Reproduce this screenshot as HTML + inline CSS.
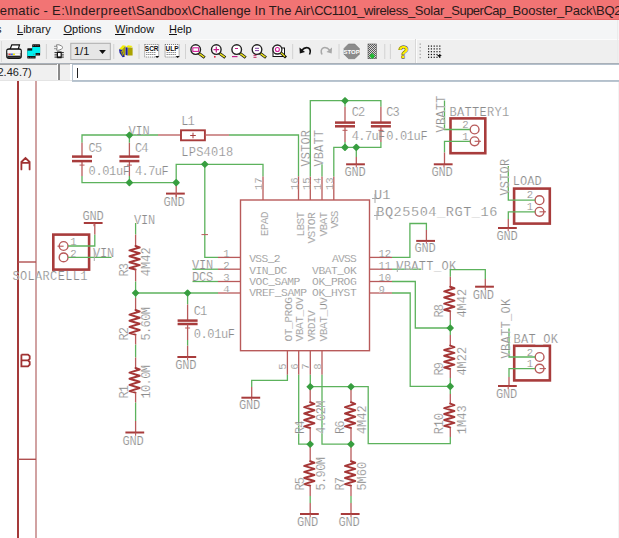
<!DOCTYPE html>
<html><head><meta charset="utf-8">
<style>
html,body{margin:0;padding:0;}
body{width:619px;height:538px;overflow:hidden;position:relative;background:#fff;font-family:"Liberation Sans",sans-serif;}
#sch{position:absolute;left:0;top:0;}
#sch text{font-family:"Liberation Mono",monospace;fill:#8c8c8c;stroke:#fff;stroke-width:0.2px;paint-order:fill;}
.title{position:absolute;left:0;top:0;width:619px;height:20px;background:#f27474;color:#2a1a1a;font-size:13px;white-space:nowrap;overflow:hidden;}
.title span{position:absolute;top:1.5px;line-height:18px;}
.menu{position:absolute;left:0;top:20px;width:619px;height:19px;background:#f4f5f6;font-size:11px;white-space:nowrap;color:#111;}
.menu span{position:absolute;top:1px;line-height:16px;}
.menu u{text-decoration:underline;}
.tool{position:absolute;left:0;top:39px;width:619px;height:24px;background:#efefef;}
.tb{position:absolute;left:0;top:63px;width:619px;height:1px;background:#a9b0b8;}
.cmd{position:absolute;left:0;top:64px;width:619px;height:17px;background:#fff;}
.coord{position:absolute;left:0;top:0;width:57px;height:16px;background:#f0f0f0;border-top:1.5px solid #a0a0a0;box-sizing:border-box;font-size:12px;line-height:15px;color:#222;white-space:nowrap;overflow:hidden;}
</style></head><body>
<svg id="sch" width="619" height="538" viewBox="0 0 619 538">
<line x1="18" y1="81" x2="18" y2="538" stroke="#a53a3a" stroke-width="2"/>
<line x1="36" y1="81" x2="36" y2="538" stroke="#cc9898" stroke-width="1.8"/>
<line x1="18" y1="262" x2="36" y2="262" stroke="#b05050" stroke-width="1.4"/>
<line x1="18" y1="459.3" x2="36" y2="459.3" stroke="#b05050" stroke-width="1.4"/>
<path d="M21.4,169.4 L21.4,162 L25.5,158 L29.6,162 L29.6,169.4 M21.4,162.8 H29.6" fill="none" stroke="#a03232" stroke-width="1.8" stroke-linecap="round"/>
<path d="M21.4,354.6 V366.3 H28 L29.7,364.6 V362 L28,360.4 H21.4 M28,360.4 L29.7,358.8 V356.2 L28,354.6 H21.4" fill="none" stroke="#a03232" stroke-width="1.8" />
<path d="M82,142.7 V135 H158" fill="none" stroke="#5cb25c" stroke-width="1.3" stroke-linejoin="miter"/>
<path d="M158,135 H181" fill="none" stroke="#b85a5a" stroke-width="1.3" />
<rect x="181" y="130.3" width="23.9" height="10" fill="none" stroke="#a83c3c" stroke-width="1.9"/>
<line x1="190.2" y1="135.5" x2="195.8" y2="135.5" stroke="#a83c3c" stroke-width="1"/>
<line x1="193" y1="132.7" x2="193" y2="138.3" stroke="#a83c3c" stroke-width="1"/>
<path d="M204.8,135 H229" fill="none" stroke="#b85a5a" stroke-width="1.3" />
<path d="M229,135 H298.5 V176.4" fill="none" stroke="#5cb25c" stroke-width="1.3" stroke-linejoin="miter"/>
<path d="M82,142.7 V156" fill="none" stroke="#b85a5a" stroke-width="1.3" />
<path d="M82,161.6 V176" fill="none" stroke="#b85a5a" stroke-width="1.3" />
<line x1="72" y1="156.6" x2="92" y2="156.6" stroke="#a83c3c" stroke-width="2.5"/>
<line x1="72" y1="161.1" x2="92" y2="161.1" stroke="#a83c3c" stroke-width="2.5"/>
<line x1="79.5" y1="165.1" x2="84.5" y2="165.1" stroke="#b85a5a" stroke-width="1"/>
<path d="M129.4,142.7 V156" fill="none" stroke="#b85a5a" stroke-width="1.3" />
<path d="M129.4,161.6 V176" fill="none" stroke="#b85a5a" stroke-width="1.3" />
<line x1="119.4" y1="156.6" x2="139.4" y2="156.6" stroke="#a83c3c" stroke-width="2.5"/>
<line x1="119.4" y1="161.1" x2="139.4" y2="161.1" stroke="#a83c3c" stroke-width="2.5"/>
<line x1="126.9" y1="165.1" x2="131.9" y2="165.1" stroke="#b85a5a" stroke-width="1"/>
<path d="M82,176 V182.6 H176.2" fill="none" stroke="#5cb25c" stroke-width="1.3" stroke-linejoin="miter"/>
<path d="M129.4,135 V142.7" fill="none" stroke="#5cb25c" stroke-width="1.3" stroke-linejoin="miter"/>
<path d="M129.4,176 V182.6" fill="none" stroke="#5cb25c" stroke-width="1.3" stroke-linejoin="miter"/>
<path d="M176.2,186 V164.3 H263 V176.4" fill="none" stroke="#5cb25c" stroke-width="1.3" stroke-linejoin="miter"/>
<line x1="166.0" y1="193.6" x2="184.79999999999998" y2="193.6" stroke="#a83c3c" stroke-width="2.0"/>
<line x1="176.2" y1="193.6" x2="176.2" y2="196.79999999999998" stroke="#b85a5a" stroke-width="1.1"/>
<line x1="176.2" y1="186" x2="176.2" y2="199.6" stroke="#b85a5a" stroke-width="1.3"/>
<path d="M204.8,164.3 V257.4 H218" fill="none" stroke="#5cb25c" stroke-width="1.3" stroke-linejoin="miter"/>
<line x1="201.5" y1="234.6" x2="208" y2="234.6" stroke="#b85a5a" stroke-width="1"/>
<text x="88.6" y="151.6" font-size="12.0" textLength="13.5" lengthAdjust="spacing">C5</text>
<text x="88.6" y="175" font-size="12.0" textLength="41.3" lengthAdjust="spacing">0.01uF</text>
<text x="135.0" y="151.8" font-size="12.0" textLength="13.5" lengthAdjust="spacing">C4</text>
<text x="135.0" y="174.8" font-size="12.0" textLength="33.6" lengthAdjust="spacing">4.7uF</text>
<text x="128.4" y="135.3" font-size="12.0" textLength="21.2" lengthAdjust="spacing">VIN</text>
<text x="181.2" y="124.6" font-size="12.0" textLength="13.5" lengthAdjust="spacing">L1</text>
<text x="181.2" y="155.8" font-size="12.0" textLength="52.0" lengthAdjust="spacing">LPS4018</text>
<text x="163.4" y="205.6" font-size="12.0" textLength="21.2" lengthAdjust="spacing">GND</text>
<rect x="53.3" y="234.6" width="35.8" height="35.00000000000003" fill="none" stroke="#a83c3c" stroke-width="2.6"/>
<circle cx="63.6" cy="246" r="4.4" fill="none" stroke="#b85a5a" stroke-width="1.4"/>
<circle cx="63.6" cy="257.4" r="4.4" fill="none" stroke="#b85a5a" stroke-width="1.4"/>
<line x1="57.5" y1="246.2" x2="63.6" y2="246.2" stroke="#b85a5a" stroke-width="1.1"/>
<path d="M68,246 H94.8 V234.6" fill="none" stroke="#5cb25c" stroke-width="1.3" stroke-linejoin="miter"/>
<path d="M94.8,234.6 V223" fill="none" stroke="#b85a5a" stroke-width="1.3" />
<line x1="83.8" y1="223" x2="102.6" y2="223" stroke="#a83c3c" stroke-width="2.0"/>
<line x1="94" y1="223" x2="94" y2="226.2" stroke="#b85a5a" stroke-width="1.1"/>
<path d="M68,257.4 H111.5" fill="none" stroke="#5cb25c" stroke-width="1.3" stroke-linejoin="miter"/>
<line x1="94.3" y1="250" x2="94.3" y2="261" stroke="#aaaaaa" stroke-width="1"/>
<text x="82.4" y="219.5" font-size="12.0" textLength="21.2" lengthAdjust="spacing">GND</text>
<text x="70.2" y="245.3" font-size="10.6">1</text>
<text x="70.2" y="256.5" font-size="10.6">2</text>
<text x="93.1" y="257.4" font-size="12.0" textLength="21.2" lengthAdjust="spacing">VIN</text>
<text x="12.4" y="280.3" font-size="12.0" textLength="75.1" lengthAdjust="spacing">SOLARCELL1</text>
<text x="133.9" y="223.5" font-size="12.0" textLength="21.2" lengthAdjust="spacing">VIN</text>
<path d="M135.6,223 V234.6" fill="none" stroke="#5cb25c" stroke-width="1.3" stroke-linejoin="miter"/>
<path d="M135.6,234.6 V246" fill="none" stroke="#b85a5a" stroke-width="1.3" />
<path d="M135.5,246.0 L139.7,247.5 L129.5,250.4 L139.7,253.3 L129.5,256.3 L139.7,259.2 L129.5,262.2 L139.7,265.1 L129.5,268.0 L135.5,269.5" fill="none" stroke="#a53636" stroke-width="2.0" stroke-linejoin="round" stroke-linecap="round"/>
<path d="M135.6,269.5 V281.5" fill="none" stroke="#b85a5a" stroke-width="1.3" />
<path d="M135.6,281.5 V298" fill="none" stroke="#5cb25c" stroke-width="1.3" stroke-linejoin="miter"/>
<path d="M135.6,298 V310" fill="none" stroke="#b85a5a" stroke-width="1.3" />
<path d="M135.5,310.0 L139.7,311.5 L129.5,314.6 L139.7,317.7 L129.5,320.8 L139.7,323.8 L129.5,326.9 L139.7,330.0 L129.5,333.1 L135.5,334.6" fill="none" stroke="#a53636" stroke-width="2.0" stroke-linejoin="round" stroke-linecap="round"/>
<path d="M135.6,334.6 V344.6" fill="none" stroke="#b85a5a" stroke-width="1.3" />
<path d="M135.6,344.6 V357.5" fill="none" stroke="#5cb25c" stroke-width="1.3" stroke-linejoin="miter"/>
<path d="M135.6,357.5 V368" fill="none" stroke="#b85a5a" stroke-width="1.3" />
<path d="M135.5,368.0 L139.7,369.5 L129.5,372.6 L139.7,375.7 L129.5,378.8 L139.7,381.8 L129.5,384.9 L139.7,388.0 L129.5,391.1 L135.5,392.6" fill="none" stroke="#a53636" stroke-width="2.0" stroke-linejoin="round" stroke-linecap="round"/>
<path d="M135.6,392.6 V402.6" fill="none" stroke="#b85a5a" stroke-width="1.3" />
<path d="M135.6,402.6 V421" fill="none" stroke="#5cb25c" stroke-width="1.3" stroke-linejoin="miter"/>
<path d="M135.6,421 V432.5" fill="none" stroke="#b85a5a" stroke-width="1.3" />
<line x1="125.39999999999999" y1="432.5" x2="144.2" y2="432.5" stroke="#a83c3c" stroke-width="2.0"/>
<line x1="135.6" y1="432.5" x2="135.6" y2="435.7" stroke="#b85a5a" stroke-width="1.1"/>
<text x="122.4" y="445" font-size="12.0" textLength="21.2" lengthAdjust="spacing">GND</text>
<text transform="translate(127.8,276.6) rotate(-90)" font-size="12.0" textLength="13.5" lengthAdjust="spacing">R3</text>
<text transform="translate(150.1,276.3) rotate(-90)" font-size="12.0" textLength="28.9" lengthAdjust="spacing">4M42</text>
<text transform="translate(127.8,340.6) rotate(-90)" font-size="12.0" textLength="13.5" lengthAdjust="spacing">R2</text>
<text transform="translate(150.1,340.6) rotate(-90)" font-size="12.0" textLength="33.6" lengthAdjust="spacing">5.60M</text>
<text transform="translate(127.8,398.6) rotate(-90)" font-size="12.0" textLength="13.5" lengthAdjust="spacing">R1</text>
<text transform="translate(150.1,398.6) rotate(-90)" font-size="12.0" textLength="33.6" lengthAdjust="spacing">10.0M</text>
<path d="M135.6,293 H218" fill="none" stroke="#5cb25c" stroke-width="1.3" stroke-linejoin="miter"/>
<path d="M187.6,293 V304.5" fill="none" stroke="#5cb25c" stroke-width="1.3" stroke-linejoin="miter"/>
<path d="M187.6,304.5 V320" fill="none" stroke="#b85a5a" stroke-width="1.3" />
<line x1="177.6" y1="320.6" x2="197.6" y2="320.6" stroke="#a83c3c" stroke-width="2.5"/>
<line x1="177.6" y1="324.0" x2="197.6" y2="324.0" stroke="#a83c3c" stroke-width="2.5"/>
<line x1="185.1" y1="328.0" x2="190.1" y2="328.0" stroke="#b85a5a" stroke-width="1"/>
<path d="M187.6,324.5 V340" fill="none" stroke="#b85a5a" stroke-width="1.3" />
<path d="M187.6,340 V345.7" fill="none" stroke="#5cb25c" stroke-width="1.3" stroke-linejoin="miter"/>
<path d="M187.6,345.7 V357" fill="none" stroke="#b85a5a" stroke-width="1.3" />
<line x1="177.4" y1="357" x2="196.2" y2="357" stroke="#a83c3c" stroke-width="2.0"/>
<line x1="187.6" y1="357" x2="187.6" y2="360.2" stroke="#b85a5a" stroke-width="1.1"/>
<text x="193.7" y="315" font-size="12.0" textLength="13.5" lengthAdjust="spacing">C1</text>
<text x="193.7" y="338" font-size="12.0" textLength="41.3" lengthAdjust="spacing">0.01uF</text>
<text x="175.2" y="369" font-size="12.0" textLength="21.2" lengthAdjust="spacing">GND</text>
<path d="M192.5,269.2 H218" fill="none" stroke="#5cb25c" stroke-width="1.3" stroke-linejoin="miter"/>
<path d="M192.5,281.5 H218" fill="none" stroke="#5cb25c" stroke-width="1.3" stroke-linejoin="miter"/>
<text x="191.9" y="269" font-size="12.0" textLength="21.2" lengthAdjust="spacing">VIN</text>
<text x="191.9" y="281" font-size="12.0" textLength="21.2" lengthAdjust="spacing">DCS</text>
<rect x="240.5" y="200" width="129" height="150.7" fill="none" stroke="#b85a5a" stroke-width="1.4"/>
<path d="M218,257.4 H240.5" fill="none" stroke="#b85a5a" stroke-width="1.3" />
<path d="M369.5,257.4 H392" fill="none" stroke="#b85a5a" stroke-width="1.3" />
<path d="M218,269.2 H240.5" fill="none" stroke="#b85a5a" stroke-width="1.3" />
<path d="M369.5,269.2 H392" fill="none" stroke="#b85a5a" stroke-width="1.3" />
<path d="M218,281.5 H240.5" fill="none" stroke="#b85a5a" stroke-width="1.3" />
<path d="M369.5,281.5 H392" fill="none" stroke="#b85a5a" stroke-width="1.3" />
<path d="M218,293 H240.5" fill="none" stroke="#b85a5a" stroke-width="1.3" />
<path d="M369.5,293 H392" fill="none" stroke="#b85a5a" stroke-width="1.3" />
<path d="M263,176.4 V200" fill="none" stroke="#b85a5a" stroke-width="1.3" />
<path d="M298.5,176.4 V200" fill="none" stroke="#b85a5a" stroke-width="1.3" />
<path d="M310.3,176.4 V200" fill="none" stroke="#b85a5a" stroke-width="1.3" />
<path d="M322,176.4 V200" fill="none" stroke="#b85a5a" stroke-width="1.3" />
<path d="M333.8,176.4 V200" fill="none" stroke="#b85a5a" stroke-width="1.3" />
<path d="M287.4,350.7 V374.8" fill="none" stroke="#b85a5a" stroke-width="1.3" />
<path d="M298.7,350.7 V374.8" fill="none" stroke="#b85a5a" stroke-width="1.3" />
<path d="M310.3,350.7 V374.8" fill="none" stroke="#b85a5a" stroke-width="1.3" />
<path d="M322,350.7 V374.8" fill="none" stroke="#b85a5a" stroke-width="1.3" />
<text x="223.2" y="257" font-size="10.6">1</text>
<text x="223.2" y="269" font-size="10.6">2</text>
<text x="223.2" y="281" font-size="10.6">3</text>
<text x="223.2" y="293" font-size="10.6">4</text>
<text x="378.5" y="257" font-size="10.6" textLength="12.5" lengthAdjust="spacing">12</text>
<text x="378.5" y="269" font-size="10.6" textLength="12.5" lengthAdjust="spacing">11</text>
<text x="378.5" y="281" font-size="10.6" textLength="12.5" lengthAdjust="spacing">10</text>
<text x="378.5" y="293" font-size="10.6">9</text>
<text x="249.2" y="261.8" font-size="11.3" textLength="31.4" lengthAdjust="spacing">VSS_2</text>
<text x="249.2" y="273.6" font-size="11.3" textLength="38.0" lengthAdjust="spacing">VIN_DC</text>
<text x="249.2" y="285.0" font-size="11.3" textLength="51.2" lengthAdjust="spacing">VOC_SAMP</text>
<text x="249.2" y="296.4" font-size="11.3" textLength="57.8" lengthAdjust="spacing">VREF_SAMP</text>
<text x="331.9" y="261.8" font-size="11.3" textLength="24.8" lengthAdjust="spacing">AVSS</text>
<text x="312.1" y="273.6" font-size="11.3" textLength="44.6" lengthAdjust="spacing">VBAT_OK</text>
<text x="312.1" y="285.0" font-size="11.3" textLength="44.6" lengthAdjust="spacing">OK_PROG</text>
<text x="312.1" y="296.4" font-size="11.3" textLength="44.6" lengthAdjust="spacing">OK_HYST</text>
<text transform="translate(262.2,189.9) rotate(-90)" font-size="10.6" textLength="12.5" lengthAdjust="spacing">17</text>
<text transform="translate(297.7,189.9) rotate(-90)" font-size="10.6" textLength="12.5" lengthAdjust="spacing">16</text>
<text transform="translate(309.5,189.9) rotate(-90)" font-size="10.6" textLength="12.5" lengthAdjust="spacing">15</text>
<text transform="translate(321.2,189.9) rotate(-90)" font-size="10.6" textLength="12.5" lengthAdjust="spacing">14</text>
<text transform="translate(333,189.9) rotate(-90)" font-size="10.6" textLength="12.5" lengthAdjust="spacing">13</text>
<text transform="translate(268,236.3) rotate(-90)" font-size="11.3" textLength="24.8" lengthAdjust="spacing">EPAD</text>
<text transform="translate(303.5,236.6) rotate(-90)" font-size="11.3" textLength="24.8" lengthAdjust="spacing">LBST</text>
<text transform="translate(315.2,243.6) rotate(-90)" font-size="11.3" textLength="31.4" lengthAdjust="spacing">VSTOR</text>
<text transform="translate(326.5,236.6) rotate(-90)" font-size="11.3" textLength="24.8" lengthAdjust="spacing">VBAT</text>
<text transform="translate(338.2,228.6) rotate(-90)" font-size="11.3" textLength="18.2" lengthAdjust="spacing">VSS</text>
<text transform="translate(291.5,341.6) rotate(-90)" font-size="11.3" textLength="44.6" lengthAdjust="spacing">OT_PROG</text>
<text transform="translate(303.2,341.6) rotate(-90)" font-size="11.3" textLength="44.6" lengthAdjust="spacing">VBAT_OV</text>
<text transform="translate(315,341.6) rotate(-90)" font-size="11.3" textLength="31.4" lengthAdjust="spacing">VRDIV</text>
<text transform="translate(327,341.6) rotate(-90)" font-size="11.3" textLength="44.6" lengthAdjust="spacing">VBAT_UV</text>
<text transform="translate(286,369.8) rotate(-90)" font-size="10.6">5</text>
<text transform="translate(297.5,369.8) rotate(-90)" font-size="10.6">6</text>
<text transform="translate(309.2,369.8) rotate(-90)" font-size="10.6">7</text>
<text transform="translate(321,369.8) rotate(-90)" font-size="10.6">8</text>
<text transform="translate(310.2,166.6) rotate(-90)" font-size="12.0" textLength="36.6" lengthAdjust="spacing">VSTOR</text>
<text transform="translate(322.5,166.6) rotate(-90)" font-size="12.0" textLength="36.6" lengthAdjust="spacing">VBATT</text>
<line x1="375" y1="194" x2="375" y2="203" stroke="#aaaaaa" stroke-width="1"/>
<line x1="372" y1="198.5" x2="378" y2="198.5" stroke="#aaaaaa" stroke-width="1"/>
<line x1="377" y1="211" x2="377" y2="220" stroke="#aaaaaa" stroke-width="1"/>
<line x1="374" y1="215.5" x2="380" y2="215.5" stroke="#aaaaaa" stroke-width="1"/>
<text x="374.0" y="199" font-size="13.6" textLength="16.5" lengthAdjust="spacing">U1</text>
<text x="376.2" y="215.8" font-size="13.6" textLength="121.2" lengthAdjust="spacing">BQ25504_RGT_16</text>
<path d="M310.3,176.4 V100.7 H380.9 V106.8" fill="none" stroke="#5cb25c" stroke-width="1.3" stroke-linejoin="miter"/>
<path d="M345,100.7 V106.8" fill="none" stroke="#5cb25c" stroke-width="1.3" stroke-linejoin="miter"/>
<path d="M345,106.8 V122" fill="none" stroke="#b85a5a" stroke-width="1.3" />
<line x1="335" y1="122.6" x2="355" y2="122.6" stroke="#a83c3c" stroke-width="2.5"/>
<line x1="335" y1="126.3" x2="355" y2="126.3" stroke="#a83c3c" stroke-width="2.5"/>
<line x1="342.5" y1="130.3" x2="347.5" y2="130.3" stroke="#b85a5a" stroke-width="1"/>
<path d="M345,126.8 V142" fill="none" stroke="#b85a5a" stroke-width="1.3" />
<path d="M380.9,106.8 V122" fill="none" stroke="#b85a5a" stroke-width="1.3" />
<line x1="370.9" y1="122.6" x2="390.9" y2="122.6" stroke="#a83c3c" stroke-width="2.5"/>
<line x1="370.9" y1="126.3" x2="390.9" y2="126.3" stroke="#a83c3c" stroke-width="2.5"/>
<line x1="378.4" y1="130.3" x2="383.4" y2="130.3" stroke="#b85a5a" stroke-width="1"/>
<path d="M380.9,126.8 V142" fill="none" stroke="#b85a5a" stroke-width="1.3" />
<path d="M322,176.4 V164.3" fill="none" stroke="#5cb25c" stroke-width="1.3" stroke-linejoin="miter"/>
<path d="M333.8,176.4 V147.4 H380.9 V142" fill="none" stroke="#5cb25c" stroke-width="1.3" stroke-linejoin="miter"/>
<path d="M345,142 V147.4" fill="none" stroke="#5cb25c" stroke-width="1.3" stroke-linejoin="miter"/>
<path d="M356.3,147.4 V157" fill="none" stroke="#5cb25c" stroke-width="1.3" stroke-linejoin="miter"/>
<path d="M356.3,157 V164.3" fill="none" stroke="#b85a5a" stroke-width="1.3" />
<line x1="346.1" y1="164.3" x2="364.90000000000003" y2="164.3" stroke="#a83c3c" stroke-width="2.0"/>
<line x1="356.3" y1="164.3" x2="356.3" y2="167.5" stroke="#b85a5a" stroke-width="1.1"/>
<text x="351.7" y="116" font-size="12.0" textLength="13.5" lengthAdjust="spacing">C2</text>
<text x="386.3" y="116" font-size="12.0" textLength="13.5" lengthAdjust="spacing">C3</text>
<text x="351.7" y="140.2" font-size="12.0" textLength="33.6" lengthAdjust="spacing">4.7uF</text>
<text x="386.3" y="140.2" font-size="12.0" textLength="41.3" lengthAdjust="spacing">0.01uF</text>
<text x="344.6" y="176.4" font-size="12.0" textLength="21.2" lengthAdjust="spacing">GND</text>
<path d="M392,257.4 H409.9 V223.5 H426.4 V230" fill="none" stroke="#5cb25c" stroke-width="1.3" stroke-linejoin="miter"/>
<path d="M426.4,230 V240.9" fill="none" stroke="#b85a5a" stroke-width="1.3" />
<line x1="416.2" y1="240.9" x2="435.0" y2="240.9" stroke="#a83c3c" stroke-width="2.0"/>
<line x1="426.4" y1="240.9" x2="426.4" y2="244.1" stroke="#b85a5a" stroke-width="1.1"/>
<text x="414.6" y="252" font-size="12.0" textLength="21.2" lengthAdjust="spacing">GND</text>
<path d="M392,269.2 H421.3" fill="none" stroke="#5cb25c" stroke-width="1.3" stroke-linejoin="miter"/>
<text x="396.2" y="270" font-size="12.0" textLength="60.0" lengthAdjust="spacing">VBATT_OK</text>
<line x1="397.3" y1="262.5" x2="397.3" y2="272" stroke="#aaaaaa" stroke-width="1"/>
<path d="M392,281.5 H415.3 V328 H450.3" fill="none" stroke="#5cb25c" stroke-width="1.3" stroke-linejoin="miter"/>
<path d="M392,293 H410.2 V386.4 H450.3" fill="none" stroke="#5cb25c" stroke-width="1.3" stroke-linejoin="miter"/>
<path d="M450.3,276.8 V269.6 H485.3 V279" fill="none" stroke="#5cb25c" stroke-width="1.3" stroke-linejoin="miter"/>
<path d="M485.3,279 V286.7" fill="none" stroke="#b85a5a" stroke-width="1.3" />
<line x1="475.1" y1="286.7" x2="493.90000000000003" y2="286.7" stroke="#a83c3c" stroke-width="2.0"/>
<line x1="485.3" y1="286.7" x2="485.3" y2="289.9" stroke="#b85a5a" stroke-width="1.1"/>
<text x="472.7" y="299" font-size="12.0" textLength="21.2" lengthAdjust="spacing">GND</text>
<path d="M450.3,276.8 V286.8" fill="none" stroke="#b85a5a" stroke-width="1.3" />
<path d="M450.2,286.8 L454.4,288.3 L444.2,291.4 L454.4,294.5 L444.2,297.5 L454.4,300.6 L444.2,303.6 L454.4,306.7 L444.2,309.8 L450.2,311.3" fill="none" stroke="#a53636" stroke-width="2.0" stroke-linejoin="round" stroke-linecap="round"/>
<path d="M450.3,311.3 V320" fill="none" stroke="#b85a5a" stroke-width="1.3" />
<path d="M450.3,320 V335" fill="none" stroke="#5cb25c" stroke-width="1.3" stroke-linejoin="miter"/>
<path d="M450.3,335 V345.6" fill="none" stroke="#b85a5a" stroke-width="1.3" />
<path d="M450.2,345.6 L454.4,347.1 L444.2,350.0 L454.4,352.9 L444.2,355.8 L454.4,358.8 L444.2,361.7 L454.4,364.6 L444.2,367.5 L450.2,369.0" fill="none" stroke="#a53636" stroke-width="2.0" stroke-linejoin="round" stroke-linecap="round"/>
<path d="M450.3,369 V378" fill="none" stroke="#b85a5a" stroke-width="1.3" />
<path d="M450.3,378 V394" fill="none" stroke="#5cb25c" stroke-width="1.3" stroke-linejoin="miter"/>
<path d="M450.3,394 V403.6" fill="none" stroke="#b85a5a" stroke-width="1.3" />
<path d="M450.2,403.6 L454.4,405.1 L444.2,408.1 L454.4,411.0 L444.2,414.0 L454.4,417.0 L444.2,420.0 L454.4,422.9 L444.2,425.9 L450.2,427.4" fill="none" stroke="#a53636" stroke-width="2.0" stroke-linejoin="round" stroke-linecap="round"/>
<path d="M450.3,427.4 V437" fill="none" stroke="#b85a5a" stroke-width="1.3" />
<path d="M450.3,437 V443.7 H368.2 V386.7 H310.2" fill="none" stroke="#5cb25c" stroke-width="1.3" stroke-linejoin="miter"/>
<text transform="translate(442.5,317.6) rotate(-90)" font-size="12.0" textLength="13.5" lengthAdjust="spacing">R8</text>
<text transform="translate(466,317.6) rotate(-90)" font-size="12.0" textLength="28.9" lengthAdjust="spacing">4M42</text>
<text transform="translate(442.5,375.6) rotate(-90)" font-size="12.0" textLength="13.5" lengthAdjust="spacing">R9</text>
<text transform="translate(466,375.6) rotate(-90)" font-size="12.0" textLength="28.9" lengthAdjust="spacing">4M22</text>
<text transform="translate(442.5,434.3) rotate(-90)" font-size="12.0" textLength="21.2" lengthAdjust="spacing">R10</text>
<text transform="translate(466,434.3) rotate(-90)" font-size="12.0" textLength="28.9" lengthAdjust="spacing">1M43</text>
<path d="M287.4,374.8 V380.3 H251.7 V387" fill="none" stroke="#5cb25c" stroke-width="1.3" stroke-linejoin="miter"/>
<path d="M251.7,387 V397.7" fill="none" stroke="#b85a5a" stroke-width="1.3" />
<line x1="241.4" y1="397.7" x2="260.2" y2="397.7" stroke="#a83c3c" stroke-width="2.0"/>
<line x1="251.6" y1="397.7" x2="251.6" y2="400.9" stroke="#b85a5a" stroke-width="1.1"/>
<text x="239.0" y="409" font-size="12.0" textLength="21.2" lengthAdjust="spacing">GND</text>
<path d="M310.3,374.8 V386.7" fill="none" stroke="#5cb25c" stroke-width="1.3" stroke-linejoin="miter"/>
<path d="M298.7,374.8 V444.2 H310.2" fill="none" stroke="#5cb25c" stroke-width="1.3" stroke-linejoin="miter"/>
<path d="M322,374.8 V444.2 H351" fill="none" stroke="#5cb25c" stroke-width="1.3" stroke-linejoin="miter"/>
<path d="M310.2,386.7 V402.3" fill="none" stroke="#b85a5a" stroke-width="1.3" />
<path d="M310.2,402.3 L314.4,403.9 L304.2,407.1 L314.4,410.3 L304.2,413.5 L314.4,416.8 L304.2,420.0 L314.4,423.2 L304.2,426.4 L310.2,428.0" fill="none" stroke="#a53636" stroke-width="2.0" stroke-linejoin="round" stroke-linecap="round"/>
<path d="M310.2,428 V444.2" fill="none" stroke="#b85a5a" stroke-width="1.3" />
<path d="M310.2,444.2 V461.3" fill="none" stroke="#b85a5a" stroke-width="1.3" />
<path d="M310.2,461.3 L314.4,462.8 L304.2,465.9 L314.4,468.9 L304.2,471.9 L314.4,475.0 L304.2,478.0 L314.4,481.0 L304.2,484.1 L310.2,485.6" fill="none" stroke="#a53636" stroke-width="2.0" stroke-linejoin="round" stroke-linecap="round"/>
<path d="M310.2,485.6 V496" fill="none" stroke="#b85a5a" stroke-width="1.3" />
<path d="M310.2,496 V503" fill="none" stroke="#5cb25c" stroke-width="1.3" stroke-linejoin="miter"/>
<path d="M310.2,503 V514" fill="none" stroke="#b85a5a" stroke-width="1.3" />
<line x1="300.0" y1="514" x2="318.8" y2="514" stroke="#a83c3c" stroke-width="2.0"/>
<line x1="310.2" y1="514" x2="310.2" y2="517.2" stroke="#b85a5a" stroke-width="1.1"/>
<path d="M351,386.7 V402.3" fill="none" stroke="#b85a5a" stroke-width="1.3" />
<path d="M351.0,402.3 L355.2,403.9 L345.0,407.1 L355.2,410.3 L345.0,413.5 L355.2,416.8 L345.0,420.0 L355.2,423.2 L345.0,426.4 L351.0,428.0" fill="none" stroke="#a53636" stroke-width="2.0" stroke-linejoin="round" stroke-linecap="round"/>
<path d="M351,428 V444.2" fill="none" stroke="#b85a5a" stroke-width="1.3" />
<path d="M351,444.2 V461.3" fill="none" stroke="#b85a5a" stroke-width="1.3" />
<path d="M351.0,461.3 L355.2,462.8 L345.0,465.9 L355.2,468.9 L345.0,471.9 L355.2,475.0 L345.0,478.0 L355.2,481.0 L345.0,484.1 L351.0,485.6" fill="none" stroke="#a53636" stroke-width="2.0" stroke-linejoin="round" stroke-linecap="round"/>
<path d="M351,485.6 V496" fill="none" stroke="#b85a5a" stroke-width="1.3" />
<path d="M351,496 V503" fill="none" stroke="#5cb25c" stroke-width="1.3" stroke-linejoin="miter"/>
<path d="M351,503 V514" fill="none" stroke="#b85a5a" stroke-width="1.3" />
<line x1="340.8" y1="514" x2="359.6" y2="514" stroke="#a83c3c" stroke-width="2.0"/>
<line x1="351" y1="514" x2="351" y2="517.2" stroke="#b85a5a" stroke-width="1.1"/>
<text x="296.9" y="526.3" font-size="12.0" textLength="21.2" lengthAdjust="spacing">GND</text>
<text x="338.4" y="526.3" font-size="12.0" textLength="21.2" lengthAdjust="spacing">GND</text>
<text transform="translate(303.5,434.1) rotate(-90)" font-size="12.0" textLength="13.5" lengthAdjust="spacing">R4</text>
<text transform="translate(325,434.1) rotate(-90)" font-size="12.0" textLength="33.6" lengthAdjust="spacing">4.02M</text>
<text transform="translate(344,434.1) rotate(-90)" font-size="12.0" textLength="13.5" lengthAdjust="spacing">R6</text>
<text transform="translate(366,434.1) rotate(-90)" font-size="12.0" textLength="28.9" lengthAdjust="spacing">4M42</text>
<text transform="translate(303.5,490.6) rotate(-90)" font-size="12.0" textLength="13.5" lengthAdjust="spacing">R5</text>
<text transform="translate(325,490.6) rotate(-90)" font-size="12.0" textLength="33.6" lengthAdjust="spacing">5.90M</text>
<text transform="translate(344,490.6) rotate(-90)" font-size="12.0" textLength="13.5" lengthAdjust="spacing">R7</text>
<text transform="translate(366,490.6) rotate(-90)" font-size="12.0" textLength="28.9" lengthAdjust="spacing">5M60</text>
<rect x="450.5" y="118.4" width="34.80000000000001" height="34.79999999999998" fill="none" stroke="#a83c3c" stroke-width="2.6"/>
<circle cx="474.6" cy="129.5" r="4.4" fill="none" stroke="#b85a5a" stroke-width="1.4"/>
<circle cx="474.6" cy="141.3" r="4.4" fill="none" stroke="#b85a5a" stroke-width="1.4"/>
<line x1="474.6" y1="141.3" x2="481" y2="141.3" stroke="#b85a5a" stroke-width="1.1"/>
<path d="M444.5,100.5 V129.5 H470.2" fill="none" stroke="#5cb25c" stroke-width="1.3" stroke-linejoin="miter"/>
<path d="M470.2,141.3 H444.5 V152.5" fill="none" stroke="#5cb25c" stroke-width="1.3" stroke-linejoin="miter"/>
<path d="M444.5,152.5 V164.3" fill="none" stroke="#b85a5a" stroke-width="1.3" />
<line x1="433.8" y1="164.3" x2="452.6" y2="164.3" stroke="#a83c3c" stroke-width="2.0"/>
<line x1="444" y1="164.3" x2="444" y2="167.5" stroke="#b85a5a" stroke-width="1.1"/>
<text x="449.4" y="115.7" font-size="12.0" textLength="59.7" lengthAdjust="spacing">BATTERY1</text>
<text x="462.2" y="128" font-size="10.6">2</text>
<text x="462.2" y="140" font-size="10.6">1</text>
<text x="431.6" y="176.4" font-size="12.0" textLength="21.2" lengthAdjust="spacing">GND</text>
<text transform="translate(445,132.4) rotate(-90)" font-size="12.0" textLength="36.6" lengthAdjust="spacing">VBATT</text>
<rect x="514.1" y="188.6" width="35.69999999999993" height="35.0" fill="none" stroke="#a83c3c" stroke-width="2.6"/>
<circle cx="539.5" cy="200.2" r="4.4" fill="none" stroke="#b85a5a" stroke-width="1.4"/>
<circle cx="539.5" cy="211.8" r="4.4" fill="none" stroke="#b85a5a" stroke-width="1.4"/>
<line x1="539.5" y1="211.8" x2="546" y2="211.8" stroke="#b85a5a" stroke-width="1.1"/>
<path d="M508.3,166 V200.2 H535.1" fill="none" stroke="#5cb25c" stroke-width="1.3" stroke-linejoin="miter"/>
<path d="M535.1,211.8 H508.3 V219" fill="none" stroke="#5cb25c" stroke-width="1.3" stroke-linejoin="miter"/>
<path d="M508.3,219 V228" fill="none" stroke="#b85a5a" stroke-width="1.3" />
<line x1="498.0" y1="228" x2="516.8" y2="228" stroke="#a83c3c" stroke-width="2.0"/>
<line x1="508.2" y1="228" x2="508.2" y2="231.2" stroke="#b85a5a" stroke-width="1.1"/>
<text x="512.8" y="185" font-size="12.0" textLength="28.9" lengthAdjust="spacing">LOAD</text>
<text x="526.7" y="198" font-size="10.6">2</text>
<text x="526.7" y="210" font-size="10.6">1</text>
<text x="496.4" y="240.3" font-size="12.0" textLength="21.2" lengthAdjust="spacing">GND</text>
<text transform="translate(509,195.5) rotate(-90)" font-size="12.0" textLength="36.6" lengthAdjust="spacing">VSTOR</text>
<rect x="514.2" y="345.8" width="35.69999999999993" height="34.599999999999966" fill="none" stroke="#a83c3c" stroke-width="2.6"/>
<circle cx="539.6" cy="357" r="4.4" fill="none" stroke="#b85a5a" stroke-width="1.4"/>
<circle cx="539.6" cy="368.6" r="4.4" fill="none" stroke="#b85a5a" stroke-width="1.4"/>
<line x1="539.6" y1="368.6" x2="546" y2="368.6" stroke="#b85a5a" stroke-width="1.1"/>
<path d="M509,328.4 V357 H535.2" fill="none" stroke="#5cb25c" stroke-width="1.3" stroke-linejoin="miter"/>
<path d="M535.2,368.6 H509 V377" fill="none" stroke="#5cb25c" stroke-width="1.3" stroke-linejoin="miter"/>
<path d="M509,377 V386" fill="none" stroke="#b85a5a" stroke-width="1.3" />
<line x1="498.0" y1="386" x2="516.8" y2="386" stroke="#a83c3c" stroke-width="2.0"/>
<line x1="508.2" y1="386" x2="508.2" y2="389.2" stroke="#b85a5a" stroke-width="1.1"/>
<text x="513.6" y="342.5" font-size="12.0" textLength="44.3" lengthAdjust="spacing">BAT_OK</text>
<text x="526.8" y="355.9" font-size="10.6">2</text>
<text x="526.8" y="367" font-size="10.6">1</text>
<text x="496.0" y="398" font-size="12.0" textLength="21.2" lengthAdjust="spacing">GND</text>
<text transform="translate(509.5,358.6) rotate(-90)" font-size="12.0" textLength="59.7" lengthAdjust="spacing">VBATT_OK</text>
<path d="M125.5,135.2 Q126.0,134.7 128.8,131.89999999999998 Q129.4,131.29999999999998 130.0,131.89999999999998 L132.70000000000002,134.6 Q133.3,135.2 132.70000000000002,135.79999999999998 L130.0,138.5 Q129.4,139.1 128.8,138.5 Z" fill="#389e40"/>
<path d="M125.5,182.6 Q126.0,182.1 128.8,179.29999999999998 Q129.4,178.7 130.0,179.29999999999998 L132.70000000000002,182.0 Q133.3,182.6 132.70000000000002,183.2 L130.0,185.9 Q129.4,186.5 128.8,185.9 Z" fill="#389e40"/>
<path d="M172.29999999999998,182.6 Q172.79999999999998,182.1 175.6,179.29999999999998 Q176.2,178.7 176.79999999999998,179.29999999999998 L179.5,182.0 Q180.1,182.6 179.5,183.2 L176.79999999999998,185.9 Q176.2,186.5 175.6,185.9 Z" fill="#389e40"/>
<path d="M200.9,164.3 Q201.4,163.8 204.20000000000002,161.0 Q204.8,160.4 205.4,161.0 L208.10000000000002,163.70000000000002 Q208.70000000000002,164.3 208.10000000000002,164.9 L205.4,167.60000000000002 Q204.8,168.20000000000002 204.20000000000002,167.60000000000002 Z" fill="#389e40"/>
<path d="M131.7,293 Q132.2,292.5 135.0,289.70000000000005 Q135.6,289.1 136.2,289.70000000000005 L138.9,292.4 Q139.5,293 138.9,293.6 L136.2,296.29999999999995 Q135.6,296.9 135.0,296.29999999999995 Z" fill="#389e40"/>
<path d="M183.7,293 Q184.2,292.5 187.0,289.70000000000005 Q187.6,289.1 188.2,289.70000000000005 L190.9,292.4 Q191.5,293 190.9,293.6 L188.2,296.29999999999995 Q187.6,296.9 187.0,296.29999999999995 Z" fill="#389e40"/>
<path d="M341.1,100.7 Q341.6,100.2 344.4,97.39999999999999 Q345,96.8 345.6,97.39999999999999 L348.29999999999995,100.10000000000001 Q348.9,100.7 348.29999999999995,101.3 L345.6,104.00000000000001 Q345,104.60000000000001 344.4,104.00000000000001 Z" fill="#389e40"/>
<path d="M341.1,147.4 Q341.6,146.9 344.4,144.1 Q345,143.5 345.6,144.1 L348.29999999999995,146.8 Q348.9,147.4 348.29999999999995,148.0 L345.6,150.70000000000002 Q345,151.3 344.4,150.70000000000002 Z" fill="#389e40"/>
<path d="M352.40000000000003,147.4 Q352.90000000000003,146.9 355.7,144.1 Q356.3,143.5 356.90000000000003,144.1 L359.59999999999997,146.8 Q360.2,147.4 359.59999999999997,148.0 L356.90000000000003,150.70000000000002 Q356.3,151.3 355.7,150.70000000000002 Z" fill="#389e40"/>
<path d="M446.40000000000003,328 Q446.90000000000003,327.5 449.7,324.70000000000005 Q450.3,324.1 450.90000000000003,324.70000000000005 L453.59999999999997,327.4 Q454.2,328 453.59999999999997,328.6 L450.90000000000003,331.29999999999995 Q450.3,331.9 449.7,331.29999999999995 Z" fill="#389e40"/>
<path d="M446.40000000000003,386.4 Q446.90000000000003,385.9 449.7,383.1 Q450.3,382.5 450.90000000000003,383.1 L453.59999999999997,385.79999999999995 Q454.2,386.4 453.59999999999997,387.0 L450.90000000000003,389.69999999999993 Q450.3,390.29999999999995 449.7,389.69999999999993 Z" fill="#389e40"/>
<path d="M306.3,386.7 Q306.8,386.2 309.59999999999997,383.40000000000003 Q310.2,382.8 310.8,383.40000000000003 L313.49999999999994,386.09999999999997 Q314.09999999999997,386.7 313.49999999999994,387.3 L310.8,389.99999999999994 Q310.2,390.59999999999997 309.59999999999997,389.99999999999994 Z" fill="#389e40"/>
<path d="M347.1,386.7 Q347.6,386.2 350.4,383.40000000000003 Q351,382.8 351.6,383.40000000000003 L354.29999999999995,386.09999999999997 Q354.9,386.7 354.29999999999995,387.3 L351.6,389.99999999999994 Q351,390.59999999999997 350.4,389.99999999999994 Z" fill="#389e40"/>
<path d="M306.3,444.2 Q306.8,443.7 309.59999999999997,440.90000000000003 Q310.2,440.3 310.8,440.90000000000003 L313.49999999999994,443.59999999999997 Q314.09999999999997,444.2 313.49999999999994,444.8 L310.8,447.49999999999994 Q310.2,448.09999999999997 309.59999999999997,447.49999999999994 Z" fill="#389e40"/>
<path d="M347.1,444.2 Q347.6,443.7 350.4,440.90000000000003 Q351,440.3 351.6,440.90000000000003 L354.29999999999995,443.59999999999997 Q354.9,444.2 354.29999999999995,444.8 L351.6,447.49999999999994 Q351,448.09999999999997 350.4,447.49999999999994 Z" fill="#389e40"/>
</svg>
<div class="title"><span style="left:-0.3px;letter-spacing:0.284px">ematic - </span><span style="left:52.1px;letter-spacing:0.366px">E:\Inderpreet\</span><span style="left:136.0px;letter-spacing:0.093px">Sandbox\</span><span style="left:191.7px;letter-spacing:0.062px">Challenge In The Air\</span><span style="left:314.2px;letter-spacing:-0.612px">CC1101_</span><span style="left:363.9px;letter-spacing:-0.367px">wireless_</span><span style="left:414.8px;letter-spacing:-0.182px">Solar_</span><span style="left:451.3px;letter-spacing:-0.522px">SuperCap_</span><span style="left:512.4px;letter-spacing:-0.031px">Booster_</span><span style="left:564.2px;letter-spacing:-0.163px">Pack\</span><span style="left:595.9px;letter-spacing:-0.165px">BQ25504</span><div style="position:absolute;left:0;top:18.5px;width:619px;height:1.5px;background:#e56262"></div></div><div style="position:absolute;left:0;top:20px;width:619px;height:1.5px;background:#fcfdfd"></div>
<div class="menu"><span style="left:-4px">s</span><span style="left:17px"><u>L</u>ibrary</span><span style="left:63.5px"><u>O</u>ptions</span><span style="left:115px"><u>W</u>indow</span><span style="left:169px"><u>H</u>elp</span></div>
<div class="tool"><div style="position:absolute;left:0;top:0;width:619px;height:1px;background:#fbfbfb"></div></div>
<svg style="position:absolute;left:0;top:0" width="619" height="64" viewBox="0 0 619 64">
<line x1="1.5" y1="41" x2="1.5" y2="62" stroke="#dcdcdc" stroke-width="1"/>
<path d="M10,49.5 L11.8,44.8 L19.5,44.8 L18.2,49.5 Z" fill="#fff" stroke="#111" stroke-width="1.2"/>
<path d="M6.8,51 Q6.8,49 9,49 L19,49 Q21.2,49 21.2,51 L21.2,56.2 Q21.2,58.3 19,58.3 L9,58.3 Q6.8,58.3 6.8,56.2 Z" fill="#d8d8d8" stroke="#111" stroke-width="1.3"/>
<rect x="7.5" y="50" width="13" height="3" fill="#f4f4f4"/>
<rect x="8.5" y="53.6" width="2.2" height="1.4" fill="#e33"/><rect x="10.7" y="53.6" width="2.2" height="1.4" fill="#36f"/><rect x="12.9" y="53.6" width="2.2" height="1.4" fill="#ee0"/><rect x="15.1" y="53.6" width="4.5" height="1.4" fill="#fff"/>
<rect x="7.5" y="55.8" width="13" height="2" fill="#222"/>
<rect x="32.2" y="44.3" width="7.9" height="11.3" rx="0.6" fill="#111"/>
<rect x="27.3" y="48.3" width="8.3" height="10.3" rx="0.6" fill="#111"/>
<rect x="32.2" y="47" width="7.9" height="6" fill="#00f0f0"/>
<rect x="27.3" y="50.6" width="8.3" height="5.4" fill="#00f0f0"/>
<path d="M33,45.6 h6 M33,54.3 h6 M28,57.4 h6.8" stroke="#777" stroke-width="0.7" stroke-dasharray="1,0.8"/>
<line x1="46.4" y1="44" x2="46.4" y2="59" stroke="#d2d2d2" stroke-width="1"/>
<line x1="113.8" y1="44" x2="113.8" y2="59" stroke="#d2d2d2" stroke-width="1"/>
<line x1="139" y1="44" x2="139" y2="59" stroke="#d2d2d2" stroke-width="1"/>
<line x1="185.5" y1="44" x2="185.5" y2="59" stroke="#d2d2d2" stroke-width="1"/>
<line x1="292.7" y1="44" x2="292.7" y2="59" stroke="#d2d2d2" stroke-width="1"/>
<line x1="339" y1="44" x2="339" y2="59" stroke="#d2d2d2" stroke-width="1"/>
<line x1="384.8" y1="44" x2="384.8" y2="59" stroke="#d2d2d2" stroke-width="1"/>
<line x1="390.4" y1="44" x2="390.4" y2="59" stroke="#d2d2d2" stroke-width="1"/>
<path d="M54,46.3 H57.2 M54,48.7 H57.2" stroke="#888" stroke-width="0.9"/>
<path d="M56.5,44.8 H59 Q61.5,45.5 63,47.5 Q61.5,49.5 59,50.2 H56.5 Q57.8,47.5 56.5,44.8 Z" fill="#fff" stroke="#777" stroke-width="0.9"/>
<rect x="56.8" y="51.5" width="5" height="6.7" rx="0.5" fill="#111"/><rect x="58" y="53" width="2.6" height="3.4" fill="#fff"/>
<path d="M54.5,52.6 h2.5 M54.5,54.9 h2.5 M54.5,57.1 h2.5 M61.6,52.6 h2.2 M61.6,54.9 h2.2 M61.6,57.1 h2.2" stroke="#111" stroke-width="0.9"/>
<rect x="70.8" y="43.3" width="39.5" height="16.3" fill="#e6e6e6" stroke="#adadad" stroke-width="1"/>
<path d="M99.1,50 H105.9 L102.5,54.1 Z" fill="#111"/>
<path d="M119,49.3 L122.8,45.2 L125.5,45.8 L121.8,49.8 Z" fill="#f2f000"/>
<path d="M119,49.3 L121.8,49.8 L124.8,56.8 L122.6,57.2 L119.6,53 Z" fill="#1c1ca8"/>
<path d="M120.5,51 L122,51.3 L123.4,55.6 L122.3,55.8 Z" fill="#a8a000"/>
<path d="M121.8,49.8 L125.5,45.8 L125.5,53 L124.8,56.8 Z" fill="#a8a000"/>
<path d="M125.6,47.2 L128,45.3 L132.6,45.9 L130.4,47.7 Z" fill="#f2f000"/>
<rect x="127.6" y="47.6" width="5" height="7.9" fill="#aaa200"/>
<path d="M125.6,47.2 L127.6,47.6 L127.6,55.5 L125.6,55 Z" fill="#1c1ca8"/>
<rect x="144.7" y="44.5" width="14" height="12.5" fill="#fff" stroke="#555" stroke-width="0.8" stroke-dasharray="1,1"/>
<text x="151.7" y="50.5" font-family="Liberation Sans" font-weight="bold" font-size="6.5" text-anchor="middle" fill="#111">SCR</text>
<path d="M146.2,52.5 h10 M146.2,54.5 h10" stroke="#555" stroke-width="0.8" stroke-dasharray="1.2,0.8"/>
<path d="M155.2,56 h4 l-2,2 z" fill="#111"/>
<rect x="165.1" y="44.5" width="14" height="12.5" fill="#fff" stroke="#555" stroke-width="0.8" stroke-dasharray="1,1"/>
<text x="172.1" y="50.5" font-family="Liberation Sans" font-weight="bold" font-size="6.5" text-anchor="middle" fill="#111">ULP</text>
<path d="M166.6,52.5 h10 M166.6,54.5 h10" stroke="#555" stroke-width="0.8" stroke-dasharray="1.2,0.8"/>
<path d="M175.6,56 h4 l-2,2 z" fill="#111"/>
<line x1="198.7" y1="53.1" x2="204.7" y2="57.6" stroke="#111" stroke-width="3"/>
<line x1="199.2" y1="53.6" x2="204.2" y2="57.2" stroke="#e8e020" stroke-width="1.6"/>
<circle cx="195.7" cy="49.6" r="4.8" fill="#fff" stroke="#222" stroke-width="1.4"/>
<rect x="192.8" y="47.8" width="5.8" height="3.6" fill="none" stroke="#d0209a" stroke-width="1.1"/>
<line x1="219.3" y1="53.1" x2="225.3" y2="57.6" stroke="#111" stroke-width="3"/>
<line x1="219.8" y1="53.6" x2="224.8" y2="57.2" stroke="#e8e020" stroke-width="1.6"/>
<circle cx="216.3" cy="49.6" r="4.8" fill="#fff" stroke="#222" stroke-width="1.4"/>
<path d="M213.5,49.6 h5.6 M216.3,46.8 v5.6" stroke="#c0208a" stroke-width="1.2"/><rect x="214" y="56" width="1.6" height="1.6" fill="#e02040"/>
<line x1="239.7" y1="53.1" x2="245.7" y2="57.6" stroke="#111" stroke-width="3"/>
<line x1="240.2" y1="53.6" x2="245.2" y2="57.2" stroke="#e8e020" stroke-width="1.6"/>
<circle cx="236.7" cy="49.6" r="4.8" fill="#fff" stroke="#222" stroke-width="1.4"/>
<path d="M235,48.5 h3" stroke="#c0208a" stroke-width="1"/><path d="M232,56.6 h5.5" stroke="#c0208a" stroke-width="1.2"/>
<line x1="260" y1="53.1" x2="266" y2="57.6" stroke="#111" stroke-width="3"/>
<line x1="260.5" y1="53.6" x2="265.5" y2="57.2" stroke="#e8e020" stroke-width="1.6"/>
<circle cx="257" cy="49.6" r="4.8" fill="#fff" stroke="#222" stroke-width="1.4"/>
<path d="M255,48.3 h4 M255,50.6 h4" stroke="#8040a0" stroke-width="1"/><path d="M253.5,55.3 h3 M253.5,57.3 h3" stroke="#c02060" stroke-width="1"/>
<rect x="273" y="48" width="11.5" height="8.5" fill="#fff" stroke="#111" stroke-width="1"/>
<line x1="280" y1="52" x2="286" y2="57.5" stroke="#111" stroke-width="3"/><line x1="280.5" y1="52.5" x2="285" y2="56.5" stroke="#e8e020" stroke-width="1.4"/>
<circle cx="277.4" cy="49.5" r="4.5" fill="#fff" stroke="#222" stroke-width="1.3"/><circle cx="277.4" cy="49.5" r="2" fill="none" stroke="#d0209a" stroke-width="1.1"/>
<path d="M301.5,50.5 Q305,46.5 308.5,48 Q311.5,50 309.5,54.5" fill="none" stroke="#111" stroke-width="1.6"/><path d="M299.5,47.5 L299.8,53.5 L305,52 Z" fill="#111"/>
<path d="M330,50.5 Q326.5,46.5 323,48 Q320,50 322,54.5" fill="none" stroke="#a8a8a8" stroke-width="1.5"/><path d="M332,47.5 L331.7,53.5 L326.5,52 Z" fill="#a8a8a8"/>
<path d="M348.5,44 H354.8 L359.3,48.5 V54.2 L354.8,58.7 H348.5 L344,54.2 V48.5 Z" fill="#8c8c8c" stroke="#777" stroke-width="0.6"/>
<text x="351.6" y="53.6" font-family="Liberation Sans" font-weight="bold" font-size="6" text-anchor="middle" fill="#fff">STOP</text>
<defs><pattern id="chk" width="2" height="2" patternUnits="userSpaceOnUse"><rect width="2" height="2" fill="#d8d8d8"/><rect width="1" height="1" fill="#5a5a5a"/><rect x="1" y="1" width="1" height="1" fill="#5a5a5a"/></pattern></defs><rect x="368" y="44" width="8.3" height="14.7" fill="url(#chk)"/><rect x="368" y="44" width="8.3" height="14.7" fill="none" stroke="#555" stroke-width="0.6"/>
<path d="M372.2,53 L375,56 L372.2,59 L369.4,56 Z" fill="#22bb33"/>
<text x="403.5" y="58.3" font-family="Liberation Sans" font-weight="bold" font-size="17" text-anchor="middle" fill="#fff000" stroke="#222" stroke-width="0.8" paint-order="stroke">?</text>
<line x1="415.5" y1="39" x2="415.5" y2="63" stroke="#d8d8d8" stroke-width="1"/><line x1="416.5" y1="39" x2="416.5" y2="63" stroke="#fcfcfc" stroke-width="1"/>
<rect x="419.6" y="43.5" width="1.2" height="1.2" fill="#9a9a9a"/>
<rect x="419.6" y="46.9" width="1.2" height="1.2" fill="#9a9a9a"/>
<rect x="419.6" y="50.3" width="1.2" height="1.2" fill="#9a9a9a"/>
<rect x="419.6" y="53.7" width="1.2" height="1.2" fill="#9a9a9a"/>
<rect x="419.6" y="57.1" width="1.2" height="1.2" fill="#9a9a9a"/>
<rect x="428.0" y="45.5" width="1.2" height="1.2" fill="#111"/>
<rect x="430.8" y="45.5" width="1.2" height="1.2" fill="#111"/>
<rect x="433.6" y="45.5" width="1.2" height="1.2" fill="#111"/>
<rect x="436.4" y="45.5" width="1.2" height="1.2" fill="#111"/>
<rect x="439.2" y="45.5" width="1.2" height="1.2" fill="#111"/>
<rect x="428.0" y="48.3" width="1.2" height="1.2" fill="#111"/>
<rect x="430.8" y="48.3" width="1.2" height="1.2" fill="#111"/>
<rect x="433.6" y="48.3" width="1.2" height="1.2" fill="#111"/>
<rect x="436.4" y="48.3" width="1.2" height="1.2" fill="#111"/>
<rect x="439.2" y="48.3" width="1.2" height="1.2" fill="#111"/>
<rect x="428.0" y="51.1" width="1.2" height="1.2" fill="#111"/>
<rect x="430.8" y="51.1" width="1.2" height="1.2" fill="#111"/>
<rect x="433.6" y="51.1" width="1.2" height="1.2" fill="#111"/>
<rect x="436.4" y="51.1" width="1.2" height="1.2" fill="#111"/>
<rect x="439.2" y="51.1" width="1.2" height="1.2" fill="#111"/>
<rect x="428.0" y="53.9" width="1.2" height="1.2" fill="#111"/>
<rect x="430.8" y="53.9" width="1.2" height="1.2" fill="#111"/>
<rect x="433.6" y="53.9" width="1.2" height="1.2" fill="#111"/>
<rect x="436.4" y="53.9" width="1.2" height="1.2" fill="#111"/>
<rect x="439.2" y="53.9" width="1.2" height="1.2" fill="#111"/>
<rect x="428.0" y="56.7" width="1.2" height="1.2" fill="#111"/>
<rect x="430.8" y="56.7" width="1.2" height="1.2" fill="#111"/>
<rect x="433.6" y="56.7" width="1.2" height="1.2" fill="#111"/>
<rect x="436.4" y="56.7" width="1.2" height="1.2" fill="#111"/>
<rect x="439.2" y="56.7" width="1.2" height="1.2" fill="#111"/>
<path d="M437,55 H441.8 L439.4,57.6 Z" fill="#111"/>
<line x1="617.5" y1="20" x2="617.5" y2="63" stroke="#ebebeb" stroke-width="1"/>
</svg>
<div style="position:absolute;left:74px;top:44px;font-size:11px;line-height:15px;color:#111">1/1</div>
<div class="tb"></div>
<div class="cmd">
<div class="coord"><span style="position:absolute;left:-2.5px;top:1px;font-size:11px;line-height:normal">2.46.7)</span></div>
<div style="position:absolute;left:58px;top:0;width:2px;height:16px;background:#8a8a8a"></div>
<div style="position:absolute;left:60px;top:0;width:10px;height:16px;background:#f0f0f0;border-top:1px solid #c8c8c8;box-sizing:border-box"></div>
<div style="position:absolute;left:72px;top:0;width:560px;height:17px;border:1px solid #b4c0cc;box-sizing:border-box;background:#fff"></div>
<div style="position:absolute;left:77px;top:4px;width:1px;height:10px;background:#222"></div>
</div>
<div style="position:absolute;left:72px;top:80.8px;width:547px;height:1.3px;background:#b9c5d0"></div><div style="position:absolute;left:618px;top:82px;width:1px;height:456px;background:#f3f3f3"></div><div style="position:absolute;left:0;top:80px;width:72px;height:1px;background:#e4e4e4"></div>
</body></html>
